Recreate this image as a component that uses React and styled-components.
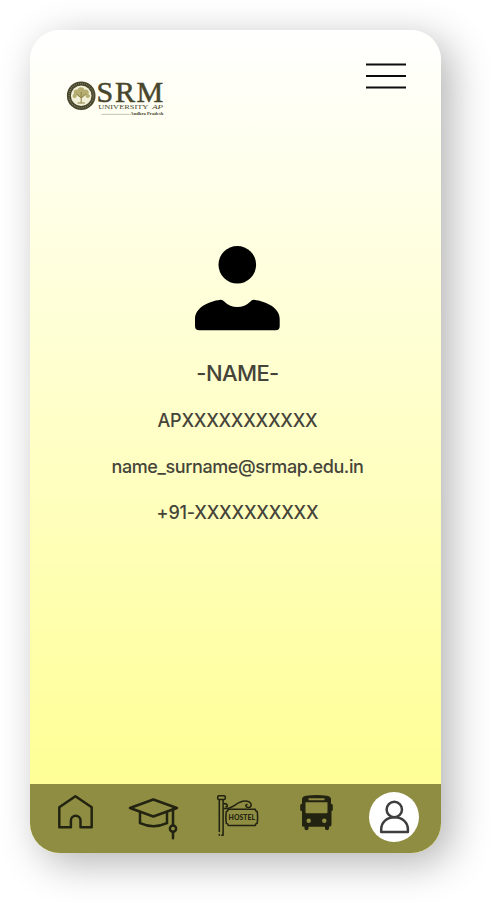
import React from "react";
import styled, { createGlobalStyle } from "styled-components";

const GlobalStyle = createGlobalStyle`
  * { box-sizing: border-box; }
  body { margin: 0; background: #fff; font-family: Inter, sans-serif; }
  svg { display: block; flex: none; }
`;

const Page = styled.div`
  width: 491px;
  height: 903px;
  padding: 30px;
  overflow: hidden;
`;

const Phone = styled.main`
  width: 411px;
  height: 823px;
  display: flex;
  flex-direction: column;
  overflow: hidden;
  border-radius: 30px;
  background: linear-gradient(180deg, #fff 0%, #ffff8c 100%);
  box-shadow: 10px 10px 40px rgba(0, 0, 0, 0.3);
`;

const Header = styled.header`
  display: flex;
  justify-content: space-between;
  align-items: flex-start;
  height: 216px;
  padding: 33px 35px 0 37px;
`;

const LogoMark = styled.svg`
  margin-top: 18px;
  overflow: visible;
`;

const MenuButton = styled.button`
  margin: 0;
  padding: 0;
  border: 0;
  background: none;
`;

const Profile = styled.section`
  flex: 1;
  display: flex;
  flex-direction: column;
  align-items: center;
  padding-left: 4px;
`;

const Name = styled.h1`
  margin: 26px 0 0;
  font-size: 22px;
  line-height: 32px;
  font-weight: 500;
  letter-spacing: -0.6px;
  color: #45443a;
`;

const Detail = styled.p`
  margin: ${(p) => p.$gap || 22}px 0 0;
  font-size: 18px;
  line-height: 24px;
  font-weight: 500;
  letter-spacing: ${(p) => p.$tracking || 0}px;
  white-space: nowrap;
  color: #45443a;
`;

const NavBar = styled.nav`
  display: grid;
  grid-template-columns: 71px 88px 82px 71px 50px;
  height: 69px;
  padding: 8px 22px 0 27px;
  background: #8f8d42;
`;

const NavIcon = styled.svg`
  height: 50px;
  fill: none;
  stroke: #232311;
  stroke-width: 2.5;
  stroke-linejoin: round;
  stroke-linecap: round;
`;

const Logo = () => (
  <LogoMark width="97" height="37" viewBox="0 0 97 37" aria-label="SRM University AP">
    <circle cx="14.2" cy="14.7" r="14.3" fill="#47462c" />
    <circle cx="14.2" cy="14.7" r="12.2" fill="none" stroke="#8f8b6e" strokeWidth="1.2" strokeDasharray="0.8 1.2" />
    <circle cx="14.2" cy="14.7" r="10.3" fill="#f1efd6" />
    <g fill="#b5ad71">
      <circle cx="14" cy="9.5" r="3.3" />
      <circle cx="9.7" cy="11.5" r="3" />
      <circle cx="18.7" cy="11.5" r="3" />
      <circle cx="7.6" cy="15" r="2.1" />
      <circle cx="20.8" cy="15" r="2.1" />
      <circle cx="14.2" cy="13" r="3.5" />
    </g>
    <path d="M14.2 11v11M14.2 17l-4.5-4M14.2 17l4.5-4M10.5 22h7.4" stroke="#8b8246" strokeWidth="1" fill="none" />
    <g fill="#47462c" fontFamily="Liberation Serif, serif">
      <text x="29.5 48 69.5" y="20.7" fontSize="30" stroke="#47462c" strokeWidth="0.5">SRM</text>
      <text x="31.3" y="27.9" fontSize="7" textLength="50" lengthAdjust="spacingAndGlyphs">UNIVERSITY</text>
      <text x="85.2" y="27.9" fontSize="7" fontStyle="italic" textLength="10.8" lengthAdjust="spacingAndGlyphs">AP</text>
      <text x="63.3" y="34.400" fontSize="4.5" fontWeight="bold" textLength="33" lengthAdjust="spacingAndGlyphs">Andhra Pradesh</text>
    </g>
    <path d="M34.5 33.300h28" stroke="#99987f" strokeWidth="0.6" />
  </LogoMark>
);

const MenuIcon = () => (
  <svg width="40" height="26" viewBox="0 0 40 26" stroke="#0c0c0c" strokeWidth="1.8" aria-hidden="true">
    <path d="M0 1.500H40M0 13H40M0 24.500H40" />
  </svg>
);

const Portrait = () => (
  <svg width="85" height="85" viewBox="195 246 85 85" aria-hidden="true">
    <circle cx="237.3" cy="264.8" r="18.8" />
    <path d="M195 319C195 308 208 301.5 220.500 299.800Q222.500 299.600 224.500 301.700C231 308.700 243.600 308.700 250.200 301.700Q252 299.600 254 299.800C266.500 301.500 279.700 308 279.700 319V326Q279.700 330.300 275.500 330.300H199.300Q195 330.300 195 326Z" />
  </svg>
);

const HomeIcon = () => (
  <NavIcon width="37" viewBox="57 792 37 50">
    <path d="M59.300 827.300V807.300L75.400 796.300L91.700 807.300V827.300H80.500V820.500A4.800 4.800 0 0 0 70.900 820.500V827.300Z" />
  </NavIcon>
);

const CapIcon = () => (
  <NavIcon width="51" viewBox="128 792 51 50">
    <path d="M130 808L153.300 799.500L176.900 808L153.300 816.500Z" />
    <path d="M140 812.500V823.200Q153.500 829.200 167 823.200V812.500M173 809V825.500M173 832V838.300" />
    <circle cx="173" cy="828.600" r="3.100" />
  </NavIcon>
);

const SignLines = styled.g`
  stroke-width: 1.55;
`;

const SignText = styled.text`
  fill: #232311;
  stroke: none;
  font: 900 6.8px Lato, sans-serif;
`;

const HostelIcon = () => (
  <NavIcon width="43" viewBox="216 792 43 50">
    <SignLines>
      <rect x="217.700" y="795.800" width="7.600" height="3.700" rx="1.200" />
      <path d="M219.300 800V831.500M219.300 834.500V835.300M223.100 800V835.300M221.700 835.300H223" />
      <path d="M228.200 809.300H255.300Q255.300 811.300 257.200 811.500Q258 817.300 257.200 823.300Q255.300 823.600 255.300 825.500H228.200Q228.200 823.600 226.300 823.300Q225.500 817.300 226.300 811.500Q228.200 811.300 228.200 809.300Z" />
      <path d="M224 808.500C234 809.500 236 801 245 801C252.500 801 252.500 807.500 248.500 807.500C245.500 807.500 245 804.800 247 804.500M224 803.700C227.500 803.200 228.500 806.800 226 806.800" />
    </SignLines>
    <SignText x="228.600" y="820" textLength="26.500" lengthAdjust="spacing">HOSTEL</SignText>
  </NavIcon>
);

const BusIcon = () => (
  <NavIcon width="37" viewBox="298 792 37 50">
    <path stroke="none" fill="#232311" fillRule="evenodd" d="M302 826V811H301.300Q300.200 811 300.200 809.500V805.500Q300.200 804 302 803.700V799.500Q302 796.300 306 795.700Q316.500 794.200 327 795.700Q331 796.300 331 799.500V803.700Q332.800 804 332.800 805.500V809.500Q332.800 811 331.700 811H331.500V824.500Q331.500 826.700 329 826.700V828.500Q329 830.200 327 830.200Q325 830.200 325 828.500V826.700H308.500V828.500Q308.500 830.200 306.500 830.200Q304.500 830.200 304.500 828.500V826.700Q302 826.700 302 826ZM305.500 802.300V812.300Q305.500 813.300 306.500 813.300H326.500Q327.500 813.300 327.500 812.300V802.300ZM308.500 798.300V800.200H324.500V798.300Z" />
    <g fill="#8f8d42" stroke="none">
      <circle cx="308.700" cy="820.800" r="2.200" />
      <circle cx="324.300" cy="820.800" r="2.200" />
    </g>
  </NavIcon>
);

const AccountIcon = () => (
  <NavIcon width="50" viewBox="369 792 50 50">
    <circle cx="394" cy="817" r="25" fill="#fff" stroke="none" />
    <g stroke="#3e3e40">
      <circle cx="394.300" cy="809.500" r="7.700" />
      <path d="M381.200 832.100V829.500C381.200 822 387 817.300 394.500 817.300C402 817.300 407.900 822 407.900 829.500V832.100Z" />
    </g>
  </NavIcon>
);

export default function App() {
  return (
    <Page>
      <GlobalStyle />
      <Phone>
        <Header>
          <Logo />
          <MenuButton aria-label="Menu"><MenuIcon /></MenuButton>
        </Header>
        <Profile>
          <Portrait />
          <Name>-NAME-</Name>
          <Detail $gap={20} $tracking={-0.25}>APXXXXXXXXXXX</Detail>
          <Detail $tracking={-0.4}>name_surname@srmap.edu.in</Detail>
          <Detail $tracking={-0.2}>+91-XXXXXXXXXX</Detail>
        </Profile>
        <NavBar>
          <HomeIcon />
          <CapIcon />
          <HostelIcon />
          <BusIcon />
          <AccountIcon />
        </NavBar>
      </Phone>
    </Page>
  );
}
